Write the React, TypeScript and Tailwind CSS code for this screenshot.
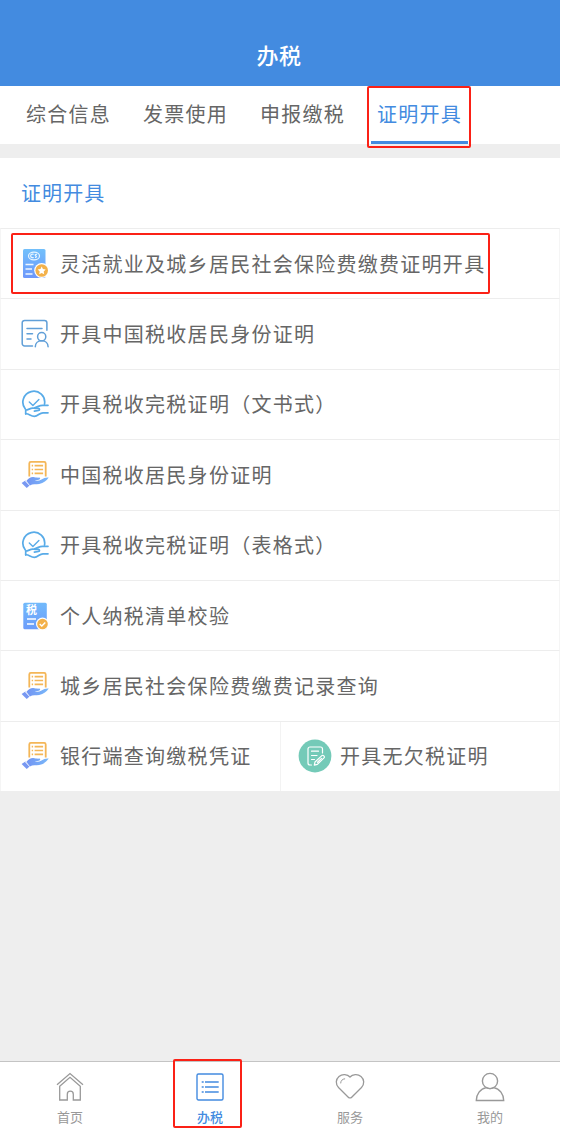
import { useState } from "react";
import type { ReactNode } from "react";

interface ServiceItem {
  id: number;
  name: string;
  icon: ReactNode;
  marked?: boolean;
}

const tabs = ["综合信息", "发票使用", "申报缴税", "证明开具"];

function InsuranceIcon() {
  return (
    <svg width="28" height="32" viewBox="0 0 28 32" fill="none">
      <defs>
        <linearGradient id="insurance" x1="0" y1="0" x2="0" y2="1">
          <stop offset="0" stopColor="#72c0fb" />
          <stop offset="1" stopColor="#6d97fb" />
        </linearGradient>
      </defs>
      <rect x="2" y="1" width="22.500" height="29" rx="1.500" fill="url(#insurance)" />
      <ellipse cx="13" cy="8" rx="5.500" ry="3.900" stroke="#e8f5ff" strokeWidth="1.200" />
      <path d="M12.600 6.300c-2.200-.5-3 .6-2.900 1.800.1 1.400 1.500 1.900 3 1.400M16 6.400c-1.500-.4-2.400.6-1.300 1.300s.8 1.900-.7 1.700" stroke="#e8f5ff" strokeWidth="1.200" />
      <path d="M4.500 16.500h8M4.500 21h6.500M4.500 26h7" stroke="#eef6ff" strokeWidth="1.500" />
      <circle cx="20.700" cy="22.500" r="7.500" fill="#fff" />
      <circle cx="20.700" cy="22.500" r="6.300" fill="#f3b14b" />
      <path d="m20.700 18.500 1.200 2.600 2.800.4-2 1.900.5 2.800-2.500-1.300-2.500 1.300.5-2.800-2-1.900 2.800-.4z" fill="#fff" />
    </svg>
  );
}

function IdentityIcon() {
  return (
    <svg width="28" height="30" viewBox="0 0 28 30" fill="none" stroke="#609fd8" strokeWidth="1.500" strokeLinecap="round">
      <path d="M11.500 27H3.600a2.400 2.400 0 0 1-2.400-2.400V3.800a2.400 2.400 0 0 1 2.400-2.400h19.900a2.400 2.400 0 0 1 2.400 2.400v7.400" />
      <path d="M6 9.500h15M6 14.700h5.500M6 19.900h4" />
      <circle cx="20.700" cy="17.700" r="4.100" />
      <path d="M14.300 27.700c0-3.400 2.500-5.900 6.400-5.900s6.400 2.500 6.400 5.900" />
    </svg>
  );
}

function CheckHandIcon() {
  return (
    <svg width="28" height="28" viewBox="0 0 28 28" fill="none" stroke="#58abe8" strokeWidth="1.700" strokeLinecap="round" strokeLinejoin="round">
      <path d="M4.300 19A10.900 10.900 0 1 1 23.500 14.200" />
      <path d="m8.300 12 3.600 3.500 6-6" strokeWidth="1.400" />
      <path d="M27 15.300h-5.500c-3.200 0-4.800 1.700-8 2.600" />
      <path d="M4.700 23.800v-3.600c2.800-.2 4.500-2.300 7.300-2.100 1.300.1 2.600.5 5.200.2 1.600-.1 1.800 1.900.2 2.200l-4 .7" />
      <path d="M4.700 23.800c3.300-.4 4.800 2.500 8.600 2.500 3.900 0 4.800-3.500 8.700-3.500h5" />
    </svg>
  );
}

function BillHandIcon() {
  return (
    <svg width="28" height="30" viewBox="0 0 28 30" fill="none">
      <defs>
        <linearGradient id="palm" x1="0" y1="0" x2="1" y2="0">
          <stop offset="0" stopColor="#7293f2" />
          <stop offset="1" stopColor="#79b9fa" />
        </linearGradient>
      </defs>
      <path d="M8.300 16.500V3.400a1.500 1.500 0 0 1 1.500-1.500h13.400a1.500 1.500 0 0 1 1.500 1.500v13" stroke="#f4b657" strokeWidth="1.800" />
      <path d="M10.700 5.600h1.400M13.600 5.600h8.500M10.700 9.500h1.400M13.600 9.500h8.500M10.700 13.400h1.400M13.600 13.400h8.500" stroke="#f4b657" strokeWidth="1.700" />
      <path d="M5.500 20.700c1.900-2.200 4.300-3.900 6.800-3.700 2 .2 3.500.8 6 .6 1.400.2 1.100 2-.4 2.200l-4 .6c2.200.7 4.600.2 6.600-.9 2.300-1.300 4.300-2.200 7.200-1.900-2 3-5 5.700-9.500 6.400-3.200.5-6.500-.2-9.300 1.500z" fill="url(#palm)" />
      <path d="m.6 23 3.800-2.600 4.500 4.800-3.200 2.900z" fill="#7898f2" />
      <path d="m4 20.700 4.700 5" stroke="#fff" strokeWidth=".7" />
    </svg>
  );
}

function TaxListIcon() {
  return (
    <svg width="28" height="28" viewBox="0 0 28 28" fill="none">
      <defs>
        <linearGradient id="tax-list" x1="0" y1="0" x2="0" y2="1">
          <stop offset="0" stopColor="#72bafb" />
          <stop offset="1" stopColor="#6c9cfa" />
        </linearGradient>
      </defs>
      <rect x="2.300" y=".7" width="23.500" height="26.600" rx="1.500" fill="url(#tax-list)" />
      <text x="5" y="12.300" fontSize="11" fontWeight="700" fill="#fff">
        税
      </text>
      <path d="M6 17h9M6 22h7" stroke="#fff" strokeWidth="1.600" />
      <circle cx="21.500" cy="22" r="6.500" fill="#fff" />
      <circle cx="21.500" cy="22" r="5.300" fill="#f3b14b" />
      <path d="m18.700 22 2.100 2 3.500-3.600" stroke="#fff" strokeWidth="1.400" />
    </svg>
  );
}

function NoDebtIcon() {
  return (
    <svg width="34" height="34" viewBox="0 0 34 34" fill="none" stroke="#fff" strokeWidth="1.200" strokeLinecap="round" strokeLinejoin="round">
      <circle cx="17" cy="17" r="16.400" fill="#74cab8" stroke="none" />
      <path d="M13.500 26H12a2 2 0 0 1-2-2V10a2 2 0 0 1 2-2h10.500a2 2 0 0 1 2 2v4" />
      <path d="M13.500 12.200h7M13.500 16.500h5.500M13.500 20.500h3" />
      <path d="m16.300 26.200.7-3.200 6.900-6.400c1.300-1 3.200.9 2.100 2.200l-6.600 6.600zM19.500 23.300l4-3.900" />
    </svg>
  );
}

function HomeIcon() {
  return (
    <svg width="28" height="30" viewBox="0 0 28 30" fill="none" stroke="#999" strokeWidth="1.300">
      <path d="M1 12.700 14 1.500l13 11.200" />
      <path d="M3.700 14.300 14 5.300l10.300 9V28h-7v-5.800a3 3 0 0 0-6 0V28h-7.600z" />
    </svg>
  );
}

function ListIcon() {
  return (
    <svg width="28" height="30" viewBox="0 0 28 30" fill="none" stroke="#438be0" strokeWidth="1.400">
      <rect x="1" y="2" width="26" height="26" rx="1.500" />
      <path d="M5.700 10h2M9 10h13.700M5.700 15h2M9 15h13.700M5.700 20h2M9 20h13.700" />
    </svg>
  );
}

function HeartIcon() {
  return (
    <svg width="30" height="30" viewBox="0 0 30 30" fill="none" stroke="#999" strokeWidth="1.300" strokeLinecap="round">
      <path d="M15 5C12.500 2.200 7.300 1.600 4 4.400.6 7.300.4 12.300 3.500 15.500l9.800 9.700c1 1 2.400 1 3.400 0l9.800-9.700c3.100-3.200 2.900-8.200-.5-11.100-3.300-2.800-8.500-2.200-11 .6z" />
      <path d="M5.700 11c0-2.200 1.600-4 4-4.200" strokeWidth="1" />
    </svg>
  );
}

function UserIcon() {
  return (
    <svg width="30" height="30" viewBox="0 0 30 30" fill="none" stroke="#999" strokeWidth="1.400">
      <circle cx="15" cy="9" r="7.600" />
      <path d="M1.300 28.500c0-6.300 3.900-11.900 10.200-12.900 2.300 1.300 4.700 1.300 7 0 6.300 1 10.200 6.600 10.200 12.900z" />
    </svg>
  );
}

const services: ServiceItem[] = [
  { id: 1, name: "灵活就业及城乡居民社会保险费缴费证明开具", icon: <InsuranceIcon />, marked: true },
  { id: 2, name: "开具中国税收居民身份证明", icon: <IdentityIcon /> },
  { id: 3, name: "开具税收完税证明（文书式）", icon: <CheckHandIcon /> },
  { id: 4, name: "中国税收居民身份证明", icon: <BillHandIcon /> },
  { id: 5, name: "开具税收完税证明（表格式）", icon: <CheckHandIcon /> },
  { id: 6, name: "个人纳税清单校验", icon: <TaxListIcon /> },
  { id: 7, name: "城乡居民社会保险费缴费记录查询", icon: <BillHandIcon /> },
];

const navs = [
  { name: "首页", icon: <HomeIcon /> },
  { name: "办税", icon: <ListIcon /> },
  { name: "服务", icon: <HeartIcon /> },
  { name: "我的", icon: <UserIcon /> },
];

export default function App() {
  const [tab, setTab] = useState("证明开具");

  return (
    <div className="bg-white">
      <div className="w-[560px] h-[1143px] flex flex-col bg-[#eeeeee] font-['Noto_Sans_CJK_SC',sans-serif] text-[#666]">
        <header className="h-[86px] shrink-0 bg-[#438be0] flex items-end justify-center pb-[17px] pr-[2px]">
          <h1 className="text-[22px] leading-[30px] font-medium text-white tracking-[0.5px]">
            办税
          </h1>
        </header>

        {/* tabs */}
        <div className="h-[58px] shrink-0 bg-white flex gap-5 pl-5">
          {tabs.map((item) => (
            <button
              key={item}
              onClick={() => setTab(item)}
              className={`relative w-[97px] h-[58px] flex items-center justify-center border-b-[3px] text-[20px] tracking-[1.2px] whitespace-nowrap ${
                item === tab
                  ? "border-[#438be0] text-[#438be0]"
                  : "border-transparent"
              }`}
            >
              {item}
              {item === "证明开具" && (
                <span className="absolute -left-1 top-0 w-[104px] h-[62px] border-2 border-[#fb2116] rounded-[2px]"></span>
              )}
            </button>
          ))}
        </div>

        {/* services */}
        <div className="mt-[14px] shrink-0 bg-white">
          <h2 className="h-[70px] flex items-center pl-[21px] text-[20px] tracking-[1.1px] text-[#438be0]">
            证明开具
          </h2>
          {services.map((item) => (
            <div
              key={item.id}
              className="relative h-[70.4px] flex items-center border-t border-x border-t-[#ededed] border-x-[#f5f5f5] pl-5"
            >
              <span className="w-[28px] flex justify-center">{item.icon}</span>
              <span className="ml-[11px] text-[20px] tracking-[1.27px] whitespace-nowrap">
                {item.name}
              </span>
              {item.marked && (
                <span className="absolute left-[10px] top-1 w-[479px] h-[61px] border-2 border-[#fb2116] rounded-[2px]"></span>
              )}
            </div>
          ))}
          <div className="h-[70.4px] grid grid-cols-2 border-t border-x border-t-[#ededed] border-x-[#f5f5f5]">
            <div className="flex items-center pl-5">
              <span className="w-[28px]">
                <BillHandIcon />
              </span>
              <span className="ml-[11px] text-[20px] tracking-[1.27px]">
                银行端查询缴税凭证
              </span>
            </div>
            <div className="flex items-center pl-[17px] border-l border-[#f3f3f3]">
              <NoDebtIcon />
              <span className="ml-[8px] text-[20px] tracking-[1.27px]">
                开具无欠税证明
              </span>
            </div>
          </div>
        </div>

        {/* bottom nav */}
        <nav className="mt-auto h-[82px] shrink-0 grid grid-cols-4 bg-white border-t border-[#c4c4c4]">
          {navs.map((item) => (
            <div
              key={item.name}
              className={`relative flex flex-col items-center pt-[10px] text-[13px] leading-5 ${
                item.name === "办税"
                  ? "text-[#438be0] font-medium"
                  : "text-[#999]"
              }`}
            >
              {item.icon}
              <span className="mt-[5px]">{item.name}</span>
              {item.name === "办税" && (
                <span className="absolute left-[33px] -top-[3px] w-[69px] h-[69px] border-2 border-[#fb2116] rounded-[2px]"></span>
              )}
            </div>
          ))}
        </nav>
      </div>
    </div>
  );
}
